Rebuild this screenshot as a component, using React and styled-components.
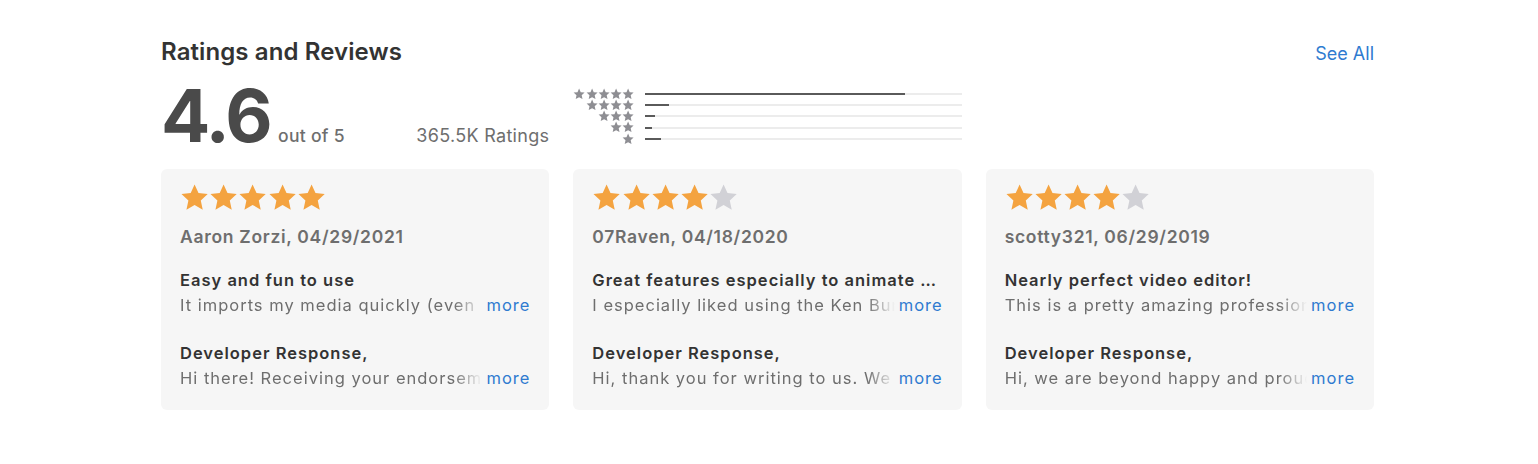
import React from "react";
import styled, { createGlobalStyle } from "styled-components";

const Global = createGlobalStyle`
  html, body { margin: 0; padding: 0; background: #fff; }
  body { font-family: Inter, "Noto Sans", "Liberation Sans", sans-serif; -webkit-font-smoothing: antialiased; }
`;

const Section = styled.section`
  width: 1213px;
  margin-left: 161px;
  padding-top: 37px;
`;

const Header = styled.header`
  display: flex;
  justify-content: space-between;
  align-items: baseline;
  height: 30px;
`;

const Title = styled.h2`
  margin: 0;
  font-size: 24px;
  line-height: 30px;
  font-weight: 600;
  color: #333;
  letter-spacing: 0.1px;
`;

const Link = styled.a`
  color: #2f7bd0;
  font-size: 18px;
  text-decoration: none;
  cursor: pointer;
`;

const Grid = styled.div`
  display: grid;
  grid-template-columns: repeat(3, 1fr);
  column-gap: 24px;
`;

const Summary = styled(Grid)`
  margin-top: 19px;
  height: 60px;
  align-items: start;
`;

const Score = styled.div`
  display: flex;
  align-items: baseline;
  height: 60px;
`;

const Big = styled.span`
  font-size: 73px;
  line-height: 60px;
  font-weight: 700;
  color: #4a4a4a;
  letter-spacing: -2.5px;
`;

const OutOf = styled.span`
  margin-left: 8px;
  font-size: 17.5px;
  font-weight: 500;
  color: #6e6e6e;
  letter-spacing: 0.3px;
`;

const Count = styled.span`
  margin-left: auto;
  font-size: 18px;
  color: #6e6e6e;
  letter-spacing: 0.3px;
`;

const Histogram = styled.div`
  padding-top: 2px;
  display: flex;
  flex-direction: column;
`;

const HistRow = styled.div`
  display: flex;
  align-items: center;
  height: 11.3px;
`;

const HistStars = styled.div`
  width: 61px;
  display: flex;
  justify-content: flex-end;
  margin-right: 11px;
`;

const Track = styled.div`
  flex: 1;
  height: 2px;
  background: #ececec;
`;

const Fill = styled.div`
  height: 2px;
  background: #5a5a5a;
`;

const Cards = styled(Grid)`
  margin-top: 23px;
`;

const Card = styled.article`
  background: #f6f6f6;
  border-radius: 6px;
  padding: 15px 20px 19.5px 19px;
  display: flex;
  flex-direction: column;
  min-width: 0;
`;

const StarRow = styled.div`
  display: flex;
  height: 28px;
  align-items: center;
`;

const Author = styled.div`
  margin-top: 13px;
  font-size: 17.5px;
  line-height: 24px;
  font-weight: 600;
  color: #6e6e6e;
  letter-spacing: 0.7px;
`;

const ReviewTitle = styled.div`
  margin-top: ${p => p.$gap}px;
  font-size: 16.5px;
  line-height: 25px;
  font-weight: 600;
  color: #333;
  letter-spacing: 1px;
  white-space: nowrap;
  overflow: hidden;
  text-overflow: ellipsis;
`;

const Line = styled.div`
  display: flex;
  align-items: baseline;
  font-size: 16.5px;
  line-height: 25px;
  color: #6e6e6e;
  letter-spacing: 1px;
`;

const Clip = styled.span`
  flex: 1;
  min-width: 0;
  white-space: nowrap;
  overflow: hidden;
  -webkit-mask-image: linear-gradient(to right, #000 calc(100% - 28px), transparent 100%);
  mask-image: linear-gradient(to right, #000 calc(100% - 28px), transparent 100%);
`;

const More = styled(Link)`
  font-size: 16.5px;
  margin-left: 4px;
  letter-spacing: 1px;
  margin-right: -1px;
`;

const STAR = "M12 1.2l3.2 7.1 7.6.8-5.7 5.2 1.6 7.6L12 18l-6.7 3.9 1.6-7.6L1.2 9.1l7.6-.8z";

function Star({ size, color }) {
  return (
    <svg width={size} height={size} viewBox="0 0 24 24" style={{ display: "block" }}>
      <path d={STAR} fill={color} />
    </svg>
  );
}

const histogram = [
  { n: 5, pct: 82 },
  { n: 4, pct: 7.5 },
  { n: 3, pct: 3 },
  { n: 2, pct: 2 },
  { n: 1, pct: 5 },
];

const reviews = [
  {
    rating: 5,
    author: "Aaron Zorzi, 04/29/2021",
    title: "Easy and fun to use",
    body: "It imports my media quickly (even large files) and the editing tools are easy to learn.",
    reply: "Hi there! Receiving your endorsement means the world to us.",
  },
  {
    rating: 4,
    author: "07Raven, 04/18/2020",
    title: "Great features especially to animate photos",
    body: "I especially liked using the Ken Burns effect on my photos.",
    reply: "Hi, thank you for writing to us. We appreciate it.",
  },
  {
    rating: 4,
    author: "scotty321, 06/29/2019",
    title: "Nearly perfect video editor!",
    body: "This is a pretty amazing professional video editor for the price.",
    reply: "Hi, we are beyond happy and proud to hear that.",
  },
];

function TextLine({ children }) {
  return (
    <Line>
      <Clip>{children}</Clip>
      <More>more</More>
    </Line>
  );
}

export default function App() {
  return (
    <>
      <Global />
      <Section>
        <Header>
          <Title>Ratings and Reviews</Title>
          <Link>See All</Link>
        </Header>
        <Summary>
          <Score>
            <Big>4.6</Big>
            <OutOf>out of 5</OutOf>
            <Count>365.5K Ratings</Count>
          </Score>
          <Histogram>
            {histogram.map(h => (
              <HistRow key={h.n}>
                <HistStars>
                  {Array.from({ length: h.n }).map((_, i) => (
                    <Star key={i} size={12.2} color="#8e8e93" />
                  ))}
                </HistStars>
                <Track>
                  <Fill style={{ width: `${h.pct}%` }} />
                </Track>
              </HistRow>
            ))}
          </Histogram>
        </Summary>
        <Cards>
          {reviews.map(r => (
            <Card key={r.author}>
              <StarRow>
                {[0, 1, 2, 3, 4].map(i => (
                  <Star key={i} size={29.2} color={i < r.rating ? "#f4a340" : "#d1d1d6"} />
                ))}
              </StarRow>
              <Author>{r.author}</Author>
              <ReviewTitle $gap={18.5}>{r.title}</ReviewTitle>
              <TextLine>{r.body}</TextLine>
              <ReviewTitle $gap={23}>Developer Response,</ReviewTitle>
              <TextLine>{r.reply}</TextLine>
            </Card>
          ))}
        </Cards>
      </Section>
    </>
  );
}
